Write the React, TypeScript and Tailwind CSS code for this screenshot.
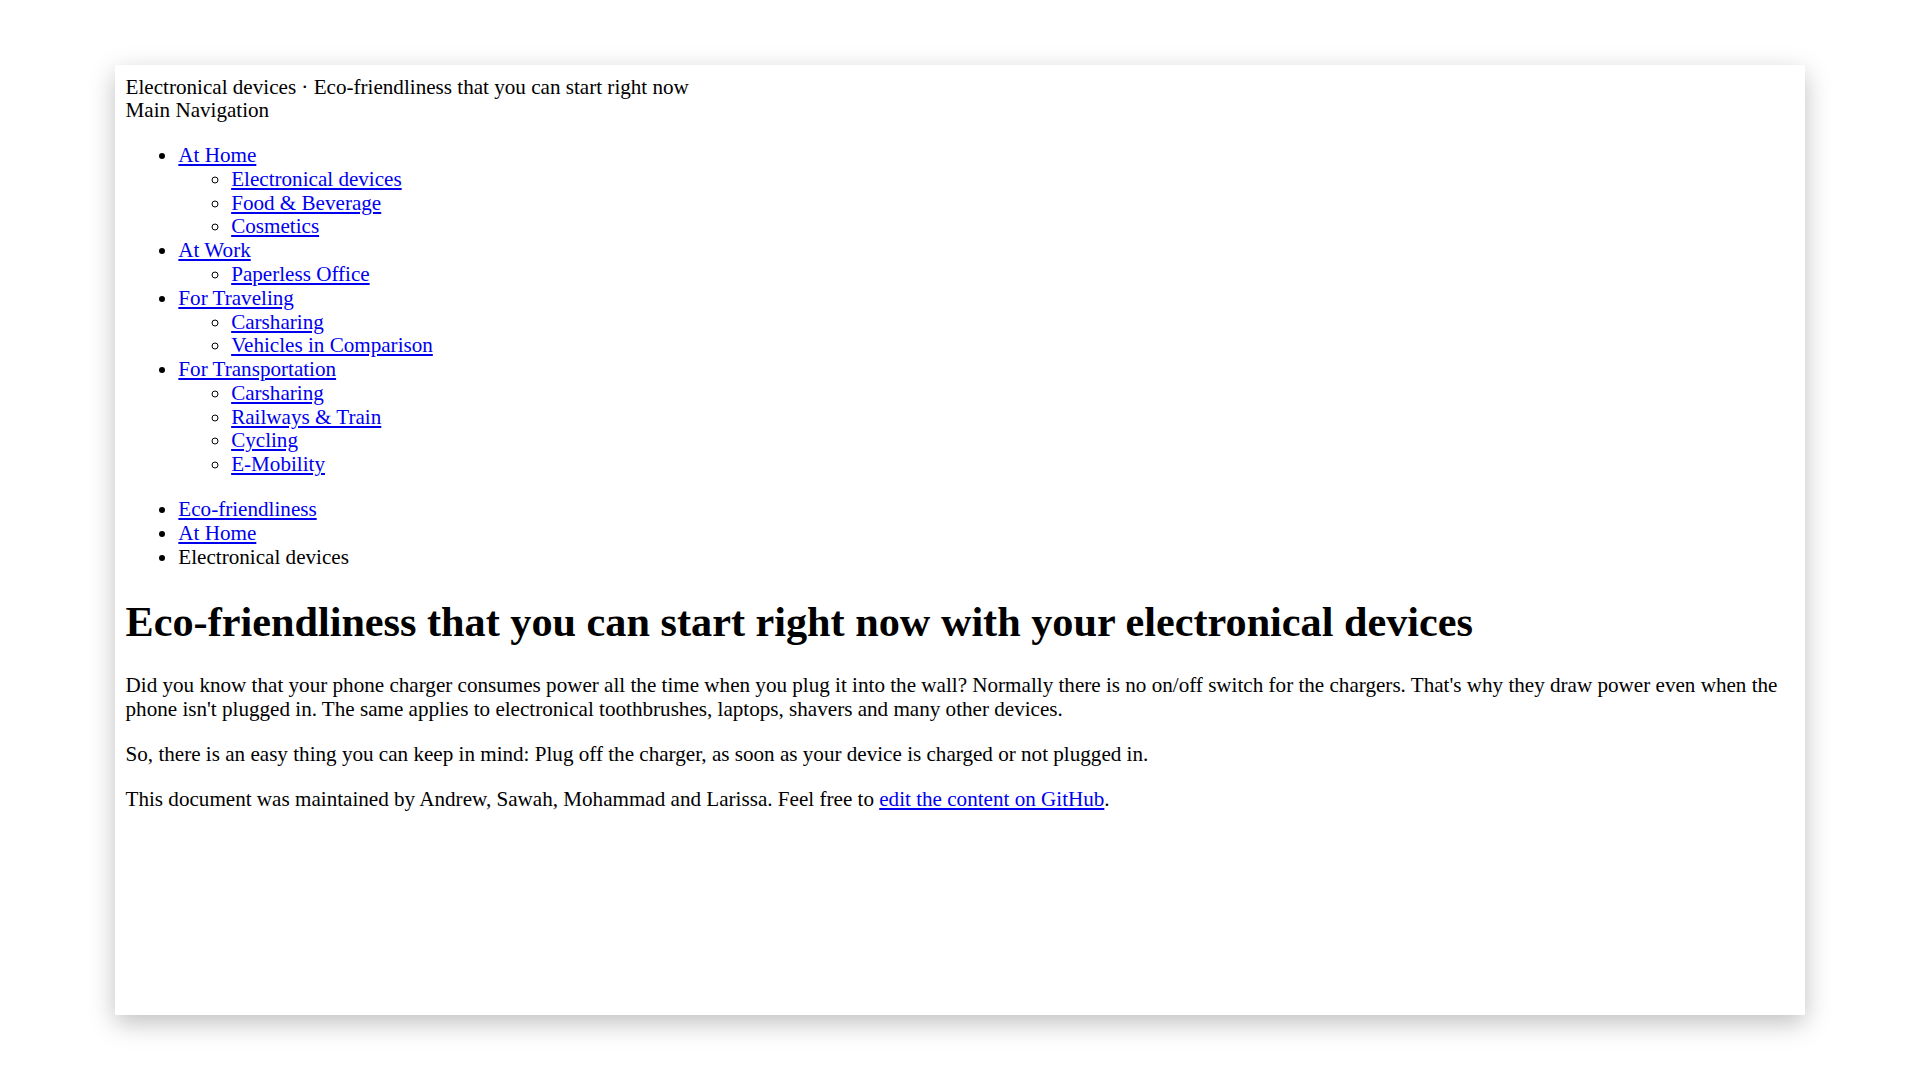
import React from "react";

const serif = "font-['Liberation_Serif','Times_New_Roman',serif]";
const link = "text-[#0000ee] underline";

function Sub({ items }: { items: string[] }) {
  return (
    <ul className="list-[circle] pl-[52.8px] m-0">
      {items.map((t, i) => (
        <li key={i}>
          <a href="#" className={link}>{t}</a>
        </li>
      ))}
    </ul>
  );
}

export default function App() {
  return (
    <div className="w-[1920px] h-[1080px] bg-white flex items-center justify-center">
      <div
        className={`w-[1690px] h-[950px] bg-white shadow-[0_8px_24px_rgba(0,0,0,0.25)] p-[10.56px] text-black text-[21.12px] leading-[23.76px] ${serif}`}
      >
        <div>Electronical devices · Eco-friendliness that you can start right now</div>
        <nav>
          <div>Main Navigation</div>
          <ul className="list-disc pl-[52.8px] my-[21.12px]">
            <li>
              <a href="#" className={link}>At Home</a>
              <Sub items={["Electronical devices", "Food & Beverage", "Cosmetics"]} />
            </li>
            <li>
              <a href="#" className={link}>At Work</a>
              <Sub items={["Paperless Office"]} />
            </li>
            <li>
              <a href="#" className={link}>For Traveling</a>
              <Sub items={["Carsharing", "Vehicles in Comparison"]} />
            </li>
            <li>
              <a href="#" className={link}>For Transportation</a>
              <Sub items={["Carsharing", "Railways & Train", "Cycling", "E-Mobility"]} />
            </li>
          </ul>
        </nav>
        <nav>
          <ul className="list-disc pl-[52.8px] my-[21.12px]">
            <li><a href="#" className={link}>Eco-friendliness</a></li>
            <li><a href="#" className={link}>At Home</a></li>
            <li>Electronical devices</li>
          </ul>
        </nav>
        <main>
          <h1 className="text-[42.24px] font-bold my-[28.3px] leading-[48.5px]">
            Eco-friendliness that you can start right now with your electronical devices
          </h1>
          <p className="my-[21.12px]">
            Did you know that your phone charger consumes power all the time when you plug it into the wall? Normally there is no on/off switch for the chargers. That's why they draw power even when the phone isn't plugged in. The same applies to electronical toothbrushes, laptops, shavers and many other devices.
          </p>
          <p className="my-[21.12px]">
            So, there is an easy thing you can keep in mind: Plug off the charger, as soon as your device is charged or not plugged in.
          </p>
          <p className="my-[21.12px]">
            This document was maintained by Andrew, Sawah, Mohammad and Larissa. Feel free to{" "}
            <a href="#" className={link}>edit the content on GitHub</a>.
          </p>
        </main>
      </div>
    </div>
  );
}
